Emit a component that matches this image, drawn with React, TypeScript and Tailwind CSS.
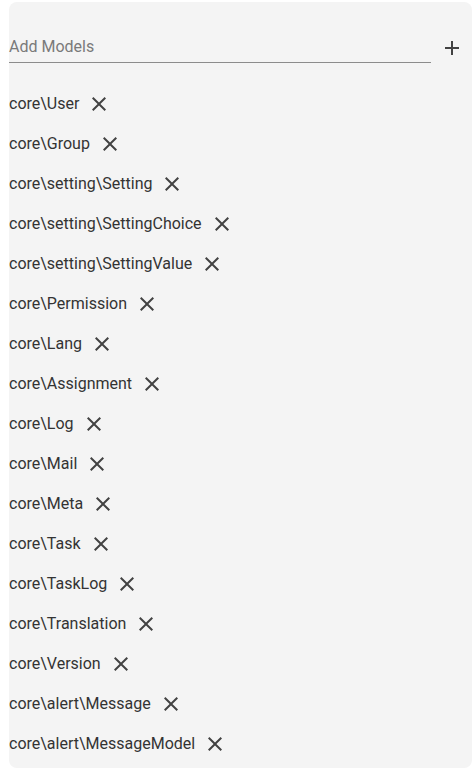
const models = [
    "core\\User",
    "core\\Group",
    "core\\setting\\Setting",
    "core\\setting\\SettingChoice",
    "core\\setting\\SettingValue",
    "core\\Permission",
    "core\\Lang",
    "core\\Assignment",
    "core\\Log",
    "core\\Mail",
    "core\\Meta",
    "core\\Task",
    "core\\TaskLog",
    "core\\Translation",
    "core\\Version",
    "core\\alert\\Message",
    "core\\alert\\MessageModel",
];

const CloseIcon = () => (
    <svg className="size-6 fill-[#424242]" viewBox="0 0 24 24">
        <path d="M19 6.41L17.59 5 12 10.59 6.41 5 5 6.41 10.59 12 5 17.59 6.41 19 12 13.41 17.59 19 19 17.59 13.41 12z" />
    </svg>
);

const AddIcon = () => (
    <svg className="size-6 fill-[#424242]" viewBox="0 0 24 24">
        <path d="M19 13h-6v6h-2v-6H5v-2h6V5h2v6h6v2z" />
    </svg>
);

export default function App() {
    return (
        <div className="min-h-[775px] bg-white font-['Roboto',sans-serif] pt-[2px]">
            <div className="ml-[9px] w-[463px] rounded-lg bg-[#f4f4f4] pt-[28px] pb-1">
                {/* input row */}
                <div className="flex items-center">
                    <div className="w-[422px] border-b border-[#8c8c8c] pt-[5px] pb-[3px]">
                        <span className="block text-base leading-6 text-[#7a7a7a]">Add Models</span>
                    </div>
                    <button type="button" className="ml-[9px] mt-[3px]">
                        <AddIcon />
                    </button>
                </div>

                <ul className="mt-[21px]">
                    {models.map((name) => (
                        <li key={name} className="flex h-10 items-center">
                            <span className="text-base leading-6 text-[#333333]">{name}</span>
                            <button type="button" className="ml-2">
                                <CloseIcon />
                            </button>
                        </li>
                    ))}
                </ul>
            </div>
        </div>
    );
}
